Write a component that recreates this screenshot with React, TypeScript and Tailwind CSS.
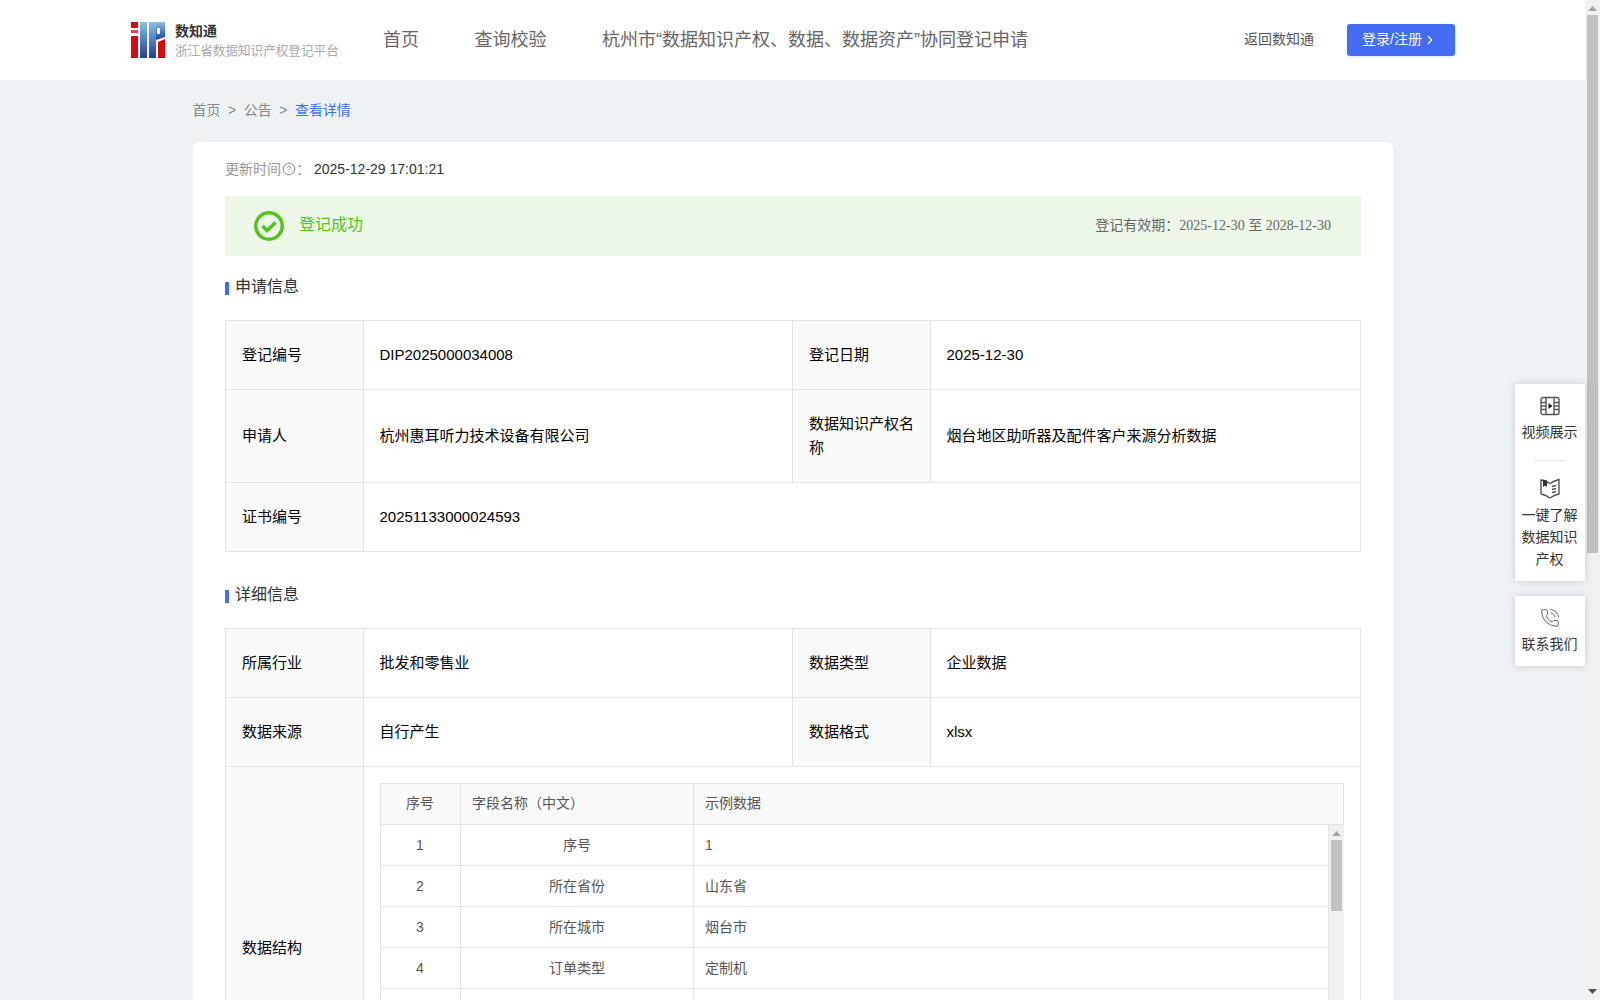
import { ChevronRight, CircleHelp, PhoneCall } from "lucide-react"

const navItems = ["首页", "查询校验", "杭州市“数据知识产权、数据、数据资产”协同登记申请"]

const fieldRows = [
  { no: "1", name: "序号", sample: "1" },
  { no: "2", name: "所在省份", sample: "山东省" },
  { no: "3", name: "所在城市", sample: "烟台市" },
  { no: "4", name: "订单类型", sample: "定制机" },
]

function Logo() {
  return (
    <svg width="35" height="36" viewBox="0 0 35 36" className="shrink-0">
      <defs>
        <linearGradient id="logoBlue" x1="0" y1="0" x2="0" y2="1">
          <stop offset="0" stopColor="#8fbdec" />
          <stop offset="0.5" stopColor="#4f7fc4" />
          <stop offset="1" stopColor="#1f3f92" />
        </linearGradient>
      </defs>
      <rect x="0" y="0" width="7" height="6" fill="#d90a0f" />
      <rect x="0" y="8" width="7" height="3" fill="#e2474b" />
      <rect x="0" y="14" width="7" height="22" fill="#d90a0f" />
      <rect x="9" y="0" width="7" height="36" fill="url(#logoBlue)" />
      <rect x="18" y="0" width="7" height="36" fill="url(#logoBlue)" />
      <path d="M25 0h9v15l-9 3z" fill="url(#logoBlue)" />
      <rect x="26" y="6" width="3" height="6" fill="#ffffff" />
      <path d="M27 20l7-3v19h-7z" fill="#d90a0f" />
    </svg>
  )
}

function SectionTitle({ title }: { title: string }) {
  return (
    <div className="flex items-center h-[24px] text-[16px] text-[#333]">
      <span className="w-[4px] h-[13px] bg-[#446df6] mr-[6px] mt-[3px]" />
      {title}
    </div>
  )
}

function FilmIcon() {
  return (
    <svg width="20" height="20" viewBox="0 0 20 20" fill="none" stroke="#555" strokeWidth="1.4">
      <rect x="1" y="1.5" width="18" height="17" rx="2" />
      <path d="M6 1.5v17M14 1.5v17M1 6.500h5M1 10h5M1 13.500h5M14 6.500h5M14 10h5M14 13.500h5" />
      <path d="M8.500 7l4 3-4 3z" fill="#222" stroke="none" />
    </svg>
  )
}

function BookIcon() {
  return (
    <svg width="20" height="21" viewBox="0 0 20 21" fill="none" stroke="#555" strokeWidth="1.4">
      <path d="M1 2c3 .5 6 1.500 9 3.500 2-1.500 5-3 9-4v14.500c-3 .5-6 2-9 4-3-2-6-3.500-9-4z" />
      <path d="M3 1.500v7.500l2-1.500 2 1.500v-6.500z" fill="#333" stroke="none" />
      <path d="M12 8.500l4-1M12 11.500l4-1M12 14.500l4-1" />
    </svg>
  )
}

function ScrollArrow({ down = false, dark = false }: { down?: boolean; dark?: boolean }) {
  return (
    <svg width="9" height="5" viewBox="0 0 9 5" className={down ? "rotate-180" : ""}>
      <path d="M4.500 0L9 5H0z" fill={dark ? "#505050" : "#a3a3a3"} />
    </svg>
  )
}

function LabelCell({ children }: { children: React.ReactNode }) {
  return <td className="border border-[#e4e4e4] bg-[#fafafa] px-4 py-[22px] align-middle">{children}</td>
}

function ValueCell({ children, colSpan }: { children: React.ReactNode; colSpan?: number }) {
  return (
    <td colSpan={colSpan} className="border border-[#e4e4e4] pl-[15.5px] pr-4 py-[22px] align-middle">
      {children}
    </td>
  )
}

function Columns() {
  return (
    <colgroup>
      <col className="w-[138px]" />
      <col className="w-[429px]" />
      <col className="w-[138px]" />
      <col />
    </colgroup>
  )
}

function FieldTable() {
  return (
    <div className="text-[14px] leading-[24px] text-[#555]">
      <div className="flex h-[42px] bg-[#fafafa] border border-[#e4e4e4]">
        <div className="w-[79px] shrink-0 flex items-center justify-center pr-[1px] pb-[2px]">序号</div>
        <div className="w-[233px] shrink-0 flex items-center px-[11px] pb-[2px] border-l border-[#e4e4e4]">字段名称（中文）</div>
        <div className="flex-1 flex items-center px-[11px] pb-[2px] border-l border-[#e4e4e4]">示例数据</div>
      </div>
      <div className="flex h-[288px] overflow-hidden">
        <div className="flex-1 border-l border-r border-[#e4e4e4]">
          {fieldRows.map((row) => (
            <div key={row.no} className="flex h-[41px] border-b border-[#e4e4e4]">
              <div className="w-[79px] shrink-0 flex items-center justify-center pr-[1px] pb-[1px]">{row.no}</div>
              <div className="w-[233px] shrink-0 flex items-center justify-center pb-[1px] border-l border-[#e4e4e4]">{row.name}</div>
              <div className="flex-1 flex items-center px-[11px] pb-[1px] border-l border-[#e4e4e4]">{row.sample}</div>
            </div>
          ))}
          <div className="flex h-[41px] border-b border-[#e4e4e4]">
            <div className="w-[79px] shrink-0" />
            <div className="w-[233px] shrink-0 border-l border-[#e4e4e4]" />
            <div className="flex-1 border-l border-[#e4e4e4]" />
          </div>
        </div>
        <div className="w-[15px] shrink-0 bg-[#f1f1f1] flex flex-col items-center pt-[6px]">
          <ScrollArrow />
          <div className="w-[11px] h-[71px] bg-[#c1c1c1] mt-[4px]" />
        </div>
      </div>
    </div>
  )
}

function SideWidget() {
  return (
    <div className="absolute left-[1515px] top-[384px] w-[70px] flex flex-col gap-[15px] text-[14px] leading-[22px] text-[#333] text-center">
      <div className="bg-white shadow-[0_0_8px_rgba(0,0,0,0.16)] pt-[12px] pb-[11px] flex flex-col items-center">
        <FilmIcon />
        <div className="mt-[5px] -ml-[1px]">视频展示</div>
        <div className="w-[32px] border-t border-[#e4e4e4] mt-[17px] mb-[17px]" />
        <BookIcon />
        <div className="mt-[5px] -ml-[1px]">一键了解<br />数据知识<br />产权</div>
      </div>
      <div className="bg-white shadow-[0_0_8px_rgba(0,0,0,0.16)] h-[70px] pt-[12px] flex flex-col items-center">
        <PhoneCall size={20} strokeWidth={1.1} color="#555" />
        <div className="mt-[5px] -ml-[1px]">联系我们</div>
      </div>
    </div>
  )
}

export default function App() {
  return (
    <div className="relative flex h-[1000px] w-[1600px] overflow-hidden bg-[#eef2f5] font-['Liberation_Sans','Noto_Sans_CJK_SC',sans-serif]">
      <div className="w-[1585px] shrink-0">
        <header className="h-[80px] bg-white flex items-center justify-between pl-[131px] pr-[130px]">
          <div className="flex items-center">
            <Logo />
            <div className="ml-[10px] w-[207px] -translate-x-[1px] translate-y-[1px]">
              <div className="text-[14px] font-bold leading-[20px] text-[#333]">数知通</div>
              <div className="text-[12.6px] leading-[20px] text-[#aaa] whitespace-nowrap">浙江省数据知识产权登记平台</div>
            </div>
            <nav className="flex gap-[55.5px] text-[18px] text-[#666]">
              {navItems.map((item) => (
                <span key={item}>{item}</span>
              ))}
            </nav>
          </div>
          <div className="flex items-center">
            <span className="text-[14px] text-[#555] mr-[33px] pb-[2px]">返回数知通</span>
            <button className="w-[108px] h-[32px] rounded-[3px] bg-[#446df6] text-white text-[14px] flex items-center pl-[15px] pb-[1px] shadow-[0_1px_3px_rgba(68,109,246,0.2)]">
              登录/注册
              <ChevronRight size={14} className="ml-[1px]" />
            </button>
          </div>
        </header>

        <main className="ml-[193px] w-[1200px]">
          <div className="h-[62px] flex items-center pb-[1px] text-[14px] text-[#888]">
            <span className="-ml-[0.5px]">首页</span>
            <span className="mx-[7.5px]">&gt;</span>
            <span>公告</span>
            <span className="mx-[7.5px]">&gt;</span>
            <span className="text-[#3f6ff5]">查看详情</span>
          </div>

          <div className="bg-white rounded-t-[6px] px-[32px] pt-[17px] h-[900px]">
            <div className="flex items-center h-[20px] text-[14px]">
              <span className="text-[#999]">更新时间</span>
              <CircleHelp size={14} strokeWidth={1.6} className="text-[#888] ml-[1px]" />
              <span className="text-[#999] w-[18px]">：</span>
              <span className="text-[#333]">2025-12-29 17:01:21</span>
            </div>

            <div className="mt-[17px] h-[60px] bg-[#ecf7e8] flex items-center justify-between pl-[29px] pr-[30px]">
              <div className="flex items-center">
                <svg width="30" height="30" viewBox="0 0 30 30" fill="none">
                  <circle cx="15" cy="15" r="13.250" stroke="#52c41a" strokeWidth="3.500" />
                  <path d="M8.500 15l4.500 4.500 8.500-8" stroke="#52c41a" strokeWidth="3.500" />
                </svg>
                <span className="ml-[15px] pb-[2px] text-[16px] text-[#52c41a]">登记成功</span>
              </div>
              <div className="text-[14px] pb-[2px] text-[#666]">
                登记有效期：
                <span className="font-['Liberation_Serif','Noto_Sans_CJK_SC',serif]">2025-12-30 至 2028-12-30</span>
              </div>
            </div>

            <div className="mt-[19px]">
              <SectionTitle title="申请信息" />
            </div>

            <table className="mt-[21px] w-[1136px] table-fixed border-collapse text-[15px] leading-[24px] text-black">
              <Columns />
              <tbody>
                <tr>
                  <LabelCell>登记编号</LabelCell>
                  <ValueCell>DIP2025000034008</ValueCell>
                  <LabelCell>登记日期</LabelCell>
                  <ValueCell>2025-12-30</ValueCell>
                </tr>
                <tr>
                  <LabelCell>申请人</LabelCell>
                  <ValueCell>杭州惠耳听力技术设备有限公司</ValueCell>
                  <LabelCell>数据知识产权名称</LabelCell>
                  <ValueCell>烟台地区助听器及配件客户来源分析数据</ValueCell>
                </tr>
                <tr>
                  <LabelCell>证书编号</LabelCell>
                  <ValueCell colSpan={3}>20251133000024593</ValueCell>
                </tr>
              </tbody>
            </table>

            <div className="mt-[31px]">
              <SectionTitle title="详细信息" />
            </div>

            <table className="mt-[21px] w-[1136px] table-fixed border-collapse text-[15px] leading-[24px] text-black">
              <Columns />
              <tbody>
                <tr>
                  <LabelCell>所属行业</LabelCell>
                  <ValueCell>批发和零售业</ValueCell>
                  <LabelCell>数据类型</LabelCell>
                  <ValueCell>企业数据</ValueCell>
                </tr>
                <tr>
                  <LabelCell>数据来源</LabelCell>
                  <ValueCell>自行产生</ValueCell>
                  <LabelCell>数据格式</LabelCell>
                  <ValueCell>xlsx</ValueCell>
                </tr>
                <tr>
                  <td className="border border-[#e4e4e4] bg-[#fafafa] px-4 align-middle">数据结构</td>
                  <td colSpan={3} className="border border-[#e4e4e4] p-4">
                    <FieldTable />
                  </td>
                </tr>
              </tbody>
            </table>
          </div>
        </main>
      </div>

      <div className="w-[15px] shrink-0 bg-[#f1f1f1] flex flex-col items-center pt-[6px] pb-[6px]">
        <ScrollArrow />
        <div className="w-[11px] h-[538px] bg-[#c1c1c1] mt-[4px]" />
        <div className="mt-auto">
          <ScrollArrow down dark />
        </div>
      </div>

      <SideWidget />
    </div>
  )
}
